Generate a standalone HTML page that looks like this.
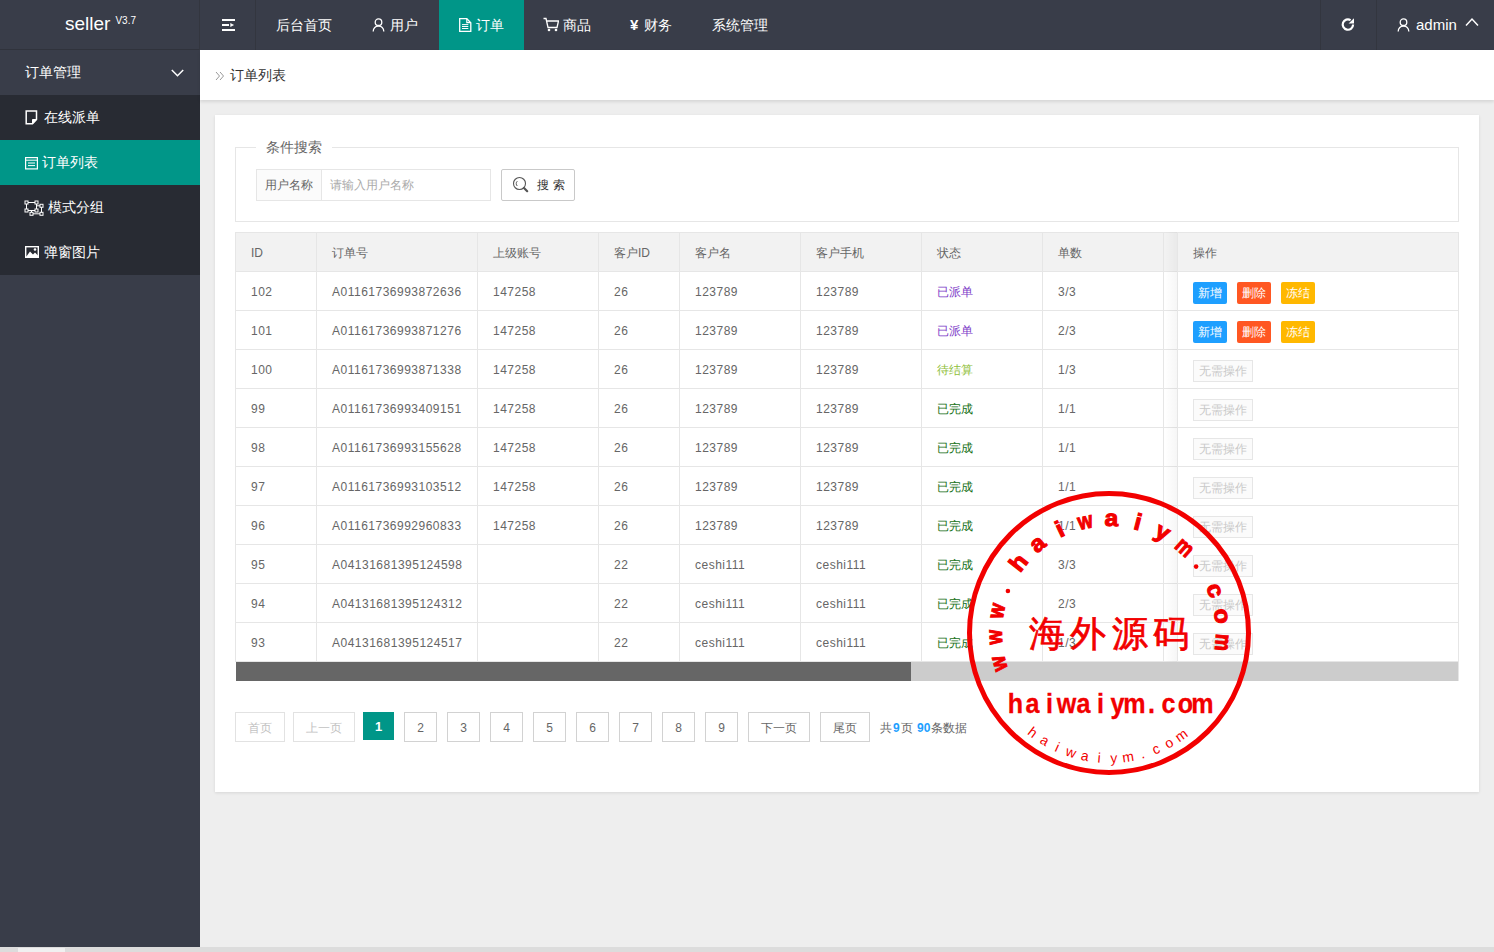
<!DOCTYPE html><html><head><meta charset="utf-8"><style>
*{margin:0;padding:0;box-sizing:border-box}
html,body{width:1494px;height:952px;overflow:hidden;background:#eeeeee;font-family:"Liberation Sans",sans-serif;color:#666;font-size:14px}
.A{position:absolute;white-space:nowrap}
.sep{position:absolute;top:0;width:1px;height:50px;background:#33363f}
.nav{position:absolute;top:0;height:50px;line-height:50px;color:#fff;font-size:14px;white-space:nowrap}
.sitem{position:absolute;left:0;width:200px;height:45px;line-height:45px;color:#fff;font-size:14px;white-space:nowrap}
.c{position:absolute;height:38px;line-height:38px;font-size:12px;color:#666;white-space:nowrap}
.num{letter-spacing:0}
.bx{position:absolute;height:22px;line-height:22px;width:34px;text-align:center;color:#fff;font-size:12px;border-radius:2px}
.dis{position:absolute;height:22px;line-height:20px;width:60px;text-align:center;color:#c9c9c9;font-size:12px;border:1px solid #e6e6e6;background:#fbfbfb;border-radius:0}
.pg{position:absolute;top:712px;height:30px;line-height:30px;border:1px solid #d2d2d2;background:#fff;text-align:center;font-size:12px;color:#666}
.hl{position:absolute;background:#e6e6e6}
</style></head><body>
<div class="A" style="left:0;top:0;width:1494px;height:50px;background:#393D49"></div>
<div class="A" style="left:0;top:50px;width:200px;height:897px;background:#393D49"></div>
<div class="A" style="left:0;top:49px;width:200px;height:1px;background:#30333c"></div>
<div class="A" style="left:65px;top:11px;font-size:19px;color:#fff;line-height:26px">seller<sup style="font-size:10px;position:relative;top:-3px;margin-left:5px;vertical-align:top">V3.7</sup></div>
<div class="sep" style="left:199px"></div>
<div class="sep" style="left:255px"></div>
<div class="sep" style="left:1320px"></div>
<div class="sep" style="left:1376px"></div>
<svg class="A" style="left:221px;top:18px" width="16" height="14" viewBox="0 0 16 14">
<rect x="1" y="1" width="13" height="2" fill="#fff"/><rect x="1" y="6" width="7" height="2" fill="#fff"/><rect x="1" y="11" width="13" height="2" fill="#fff"/>
<path d="M9.3 4.9 L13.1 7 L9.3 9.1Z" fill="#fff"/></svg>
<div class="nav" style="left:276px">后台首页</div>
<svg class="A" style="left:372px;top:18px" width="13" height="14" viewBox="0 0 13 14"><circle cx="6.5" cy="4.2" r="3.3" fill="none" stroke="#fff" stroke-width="1.3"/><path d="M1.2 13.5 C1.2 9.6 3.6 8.2 6.5 8.2 C9.4 8.2 11.8 9.6 11.8 13.5" fill="none" stroke="#fff" stroke-width="1.3"/></svg>
<div class="nav" style="left:390px">用户</div>
<div class="A" style="left:439px;top:0;width:85px;height:50px;background:#009688"></div>
<svg class="A" style="left:459px;top:18px" width="13" height="14" viewBox="0 0 13 14"><path d="M0.7 0.7 H7.8 L11.8 4.7 V13.3 H0.7Z" fill="none" stroke="#fff" stroke-width="1.3"/><path d="M7.8 0.7 V4.7 H11.8" fill="none" stroke="#fff" stroke-width="1.2"/><path d="M3 6.6 H9.3 M3 8.5 H9.3 M3 10.5 H9.3" stroke="#fff" stroke-width="1"/></svg>
<div class="nav" style="left:476px">订单</div>
<svg class="A" style="left:543px;top:17px" width="16" height="15" viewBox="0 0 16 15"><path d="M0.5 1.5 H3 L5 10.5 H14 L15.5 4 H4" fill="none" stroke="#fff" stroke-width="1.3"/><circle cx="6" cy="13" r="1.3" fill="#fff"/><circle cx="13" cy="13" r="1.3" fill="#fff"/></svg>
<div class="nav" style="left:563px">商品</div>
<div class="nav" style="left:630px;font-weight:bold;font-size:15px">¥</div>
<div class="nav" style="left:644px">财务</div>
<div class="nav" style="left:712px">系统管理</div>
<svg class="A" style="left:1340px;top:17px" width="16" height="16" viewBox="0 0 16 16"><path d="M13.1 7.6 A5.2 5.2 0 1 1 10.6 3.1" fill="none" stroke="#fff" stroke-width="2.2"/><path d="M14 1.2 L14 6.6 L8.6 6.6Z" fill="#fff"/></svg>
<svg class="A" style="left:1397px;top:18px" width="13" height="14" viewBox="0 0 13 14"><circle cx="6.5" cy="4.2" r="3.3" fill="none" stroke="#fff" stroke-width="1.3"/><path d="M1.2 13.5 C1.2 9.6 3.6 8.2 6.5 8.2 C9.4 8.2 11.8 9.6 11.8 13.5" fill="none" stroke="#fff" stroke-width="1.3"/></svg>
<div class="nav" style="left:1416px;font-size:15px">admin</div>
<svg class="A" style="left:1465px;top:17px" width="14" height="10" viewBox="0 0 14 10"><path d="M1 8.5 L7 2 L13 8.5" fill="none" stroke="#fff" stroke-width="1.5"/></svg>
<div class="sitem" style="top:50px;background:#393D49"><span style="position:absolute;left:25px">订单管理</span></div>
<svg class="A" style="left:171px;top:69px" width="13" height="9" viewBox="0 0 13 9"><path d="M0.8 1 L6.5 6.8 L12.2 1" fill="none" stroke="#fff" stroke-width="1.5"/></svg>
<div class="A" style="left:0;top:95px;width:200px;height:180px;background:#282B33"></div>
<div class="A" style="left:0;top:140px;width:200px;height:45px;background:#009688"></div>
<div class="sitem" style="top:95px"><span style="position:absolute;left:44px">在线派单</span></div>
<svg class="A" style="left:25px;top:110px" width="13" height="15" viewBox="0 0 13 15"><path d="M1.2 1 H11.5 V9.5 L7.5 13.8 H1.2Z" fill="none" stroke="#fff" stroke-width="1.5"/><path d="M11.5 9.5 H7.5 V13.8Z" fill="#fff" stroke="#fff" stroke-width="1"/></svg>
<div class="sitem" style="top:140px"><span style="position:absolute;left:42px">订单列表</span></div>
<svg class="A" style="left:25px;top:157px" width="13" height="13" viewBox="0 0 13 13"><rect x="0.6" y="0.6" width="11.8" height="11.3" fill="none" stroke="#fff" stroke-width="1.2"/><path d="M1 3.2 H12 M3 6 H10 M3 8.6 H10" stroke="#fff" stroke-width="1"/></svg>
<div class="sitem" style="top:185px"><span style="position:absolute;left:48px">模式分组</span></div>
<svg class="A" style="left:24px;top:200px" width="20" height="16" viewBox="0 0 20 16"><g fill="none" stroke="#fff" stroke-width="1"><path d="M2.5 2.5 H12.5 V10.5 H2.5Z"/><path d="M7.5 10.5 V13.8 H17.5 V5.8 H12.5"/></g><g fill="#282B33" stroke="#fff" stroke-width="1"><rect x="1" y="1" width="3" height="3"/><rect x="11" y="1" width="3" height="3"/><rect x="1" y="9" width="3" height="3"/><rect x="11" y="9" width="3" height="3"/><rect x="16" y="4.3" width="3" height="3"/><rect x="6" y="12.3" width="3" height="3"/><rect x="16" y="12.3" width="3" height="3"/></g></svg>
<div class="sitem" style="top:230px"><span style="position:absolute;left:44px">弹窗图片</span></div>
<svg class="A" style="left:25px;top:246px" width="14" height="12" viewBox="0 0 14 12"><rect x="0.7" y="0.7" width="12.6" height="10.6" fill="none" stroke="#fff" stroke-width="1.4"/><path d="M1 11 L5 5.5 L8 8.5 L10 6.5 L13 9.5 V11Z" fill="#fff"/><circle cx="10" cy="3.5" r="1.3" fill="#fff"/></svg>
<div class="A" style="left:200px;top:50px;width:1294px;height:50px;background:#fff;box-shadow:0 2px 3px rgba(0,0,0,.10)"></div>
<svg class="A" style="left:215px;top:71px" width="10" height="10" viewBox="0 0 10 10"><path d="M1 1 L4.5 5 L1 9 M5 1 L8.5 5 L5 9" fill="none" stroke="#999" stroke-width="1"/></svg>
<div class="A" style="left:230px;top:66px;font-size:14px;color:#333;line-height:18px">订单列表</div>
<div class="A" style="left:215px;top:115px;width:1264px;height:677px;background:#fff;box-shadow:0 1px 3px rgba(0,0,0,.1)"></div>
<div class="A" style="left:235px;top:147px;width:1224px;height:75px;border:1px solid #e6e6e6"></div>
<div class="A" style="left:256px;top:138px;padding:0 10px;background:#fff;font-size:14px;color:#666;line-height:18px">条件搜索</div>
<div class="A" style="left:256px;top:169px;width:66px;height:32px;border:1px solid #e6e6e6;background:#fbfbfb;line-height:30px;font-size:12px;color:#666;padding-left:8px">用户名称</div>
<div class="A" style="left:321px;top:169px;width:170px;height:32px;border:1px solid #e6e6e6;background:#fff;line-height:30px;font-size:12px;color:#aaa;padding-left:8px">请输入用户名称</div>
<div class="A" style="left:501px;top:169px;width:74px;height:32px;border:1px solid #c9c9c9;border-radius:2px;background:#fff"></div>
<svg class="A" style="left:512px;top:176px" width="18" height="18" viewBox="0 0 18 18"><circle cx="7.5" cy="7.5" r="6" fill="none" stroke="#555" stroke-width="1.1"/><path d="M5.3 5.2 A3.2 3.2 0 0 0 5.3 10" fill="none" stroke="#555" stroke-width="1"/><path d="M12 12 L15.2 15.2" stroke="#555" stroke-width="2.2" stroke-linecap="round"/></svg>
<div class="A" style="left:537px;top:177px;font-size:12px;color:#333;line-height:16px;letter-spacing:4px">搜索</div>
<div class="A" style="left:235px;top:232px;width:1224px;height:39px;background:#f2f2f2"></div>
<div class="hl" style="left:235px;top:232px;width:1px;height:430px"></div>
<div class="hl" style="left:1458px;top:232px;width:1px;height:449px"></div>
<div class="hl" style="left:235px;top:232px;width:1224px;height:1px"></div>
<div class="hl" style="left:235px;top:271px;width:1224px;height:1px"></div>
<div class="hl" style="left:235px;top:310px;width:1224px;height:1px"></div>
<div class="hl" style="left:235px;top:349px;width:1224px;height:1px"></div>
<div class="hl" style="left:235px;top:388px;width:1224px;height:1px"></div>
<div class="hl" style="left:235px;top:427px;width:1224px;height:1px"></div>
<div class="hl" style="left:235px;top:466px;width:1224px;height:1px"></div>
<div class="hl" style="left:235px;top:505px;width:1224px;height:1px"></div>
<div class="hl" style="left:235px;top:544px;width:1224px;height:1px"></div>
<div class="hl" style="left:235px;top:583px;width:1224px;height:1px"></div>
<div class="hl" style="left:235px;top:622px;width:1224px;height:1px"></div>
<div class="hl" style="left:235px;top:661px;width:1224px;height:1px"></div>
<div class="hl" style="left:316px;top:232px;width:1px;height:430px"></div>
<div class="hl" style="left:477px;top:232px;width:1px;height:430px"></div>
<div class="hl" style="left:598px;top:232px;width:1px;height:430px"></div>
<div class="hl" style="left:679px;top:232px;width:1px;height:430px"></div>
<div class="hl" style="left:800px;top:232px;width:1px;height:430px"></div>
<div class="hl" style="left:921px;top:232px;width:1px;height:430px"></div>
<div class="hl" style="left:1042px;top:232px;width:1px;height:430px"></div>
<div class="hl" style="left:1163px;top:232px;width:1px;height:430px"></div>
<div class="c" style="left:251px;top:234px">ID</div>
<div class="c" style="left:332px;top:234px">订单号</div>
<div class="c" style="left:493px;top:234px">上级账号</div>
<div class="c" style="left:614px;top:234px">客户ID</div>
<div class="c" style="left:695px;top:234px">客户名</div>
<div class="c" style="left:816px;top:234px">客户手机</div>
<div class="c" style="left:937px;top:234px">状态</div>
<div class="c" style="left:1058px;top:234px">单数</div>
<div class="c" style="left:251px;top:273px;letter-spacing:0.5px;">102</div>
<div class="c" style="left:332px;top:273px;letter-spacing:0.5px;">A01161736993872636</div>
<div class="c" style="left:493px;top:273px;letter-spacing:0.5px;">147258</div>
<div class="c" style="left:614px;top:273px;letter-spacing:0.5px;">26</div>
<div class="c" style="left:695px;top:273px;letter-spacing:0.5px;">123789</div>
<div class="c" style="left:816px;top:273px;letter-spacing:0.5px;">123789</div>
<div class="c" style="left:937px;top:273px;color:#7d3cc8;">已派单</div>
<div class="c" style="left:1058px;top:273px;letter-spacing:0.5px;">3/3</div>
<div class="c" style="left:251px;top:312px;letter-spacing:0.5px;">101</div>
<div class="c" style="left:332px;top:312px;letter-spacing:0.5px;">A01161736993871276</div>
<div class="c" style="left:493px;top:312px;letter-spacing:0.5px;">147258</div>
<div class="c" style="left:614px;top:312px;letter-spacing:0.5px;">26</div>
<div class="c" style="left:695px;top:312px;letter-spacing:0.5px;">123789</div>
<div class="c" style="left:816px;top:312px;letter-spacing:0.5px;">123789</div>
<div class="c" style="left:937px;top:312px;color:#7d3cc8;">已派单</div>
<div class="c" style="left:1058px;top:312px;letter-spacing:0.5px;">2/3</div>
<div class="c" style="left:251px;top:351px;letter-spacing:0.5px;">100</div>
<div class="c" style="left:332px;top:351px;letter-spacing:0.5px;">A01161736993871338</div>
<div class="c" style="left:493px;top:351px;letter-spacing:0.5px;">147258</div>
<div class="c" style="left:614px;top:351px;letter-spacing:0.5px;">26</div>
<div class="c" style="left:695px;top:351px;letter-spacing:0.5px;">123789</div>
<div class="c" style="left:816px;top:351px;letter-spacing:0.5px;">123789</div>
<div class="c" style="left:937px;top:351px;color:#8fc03a;">待结算</div>
<div class="c" style="left:1058px;top:351px;letter-spacing:0.5px;">1/3</div>
<div class="c" style="left:251px;top:390px;letter-spacing:0.5px;">99</div>
<div class="c" style="left:332px;top:390px;letter-spacing:0.5px;">A01161736993409151</div>
<div class="c" style="left:493px;top:390px;letter-spacing:0.5px;">147258</div>
<div class="c" style="left:614px;top:390px;letter-spacing:0.5px;">26</div>
<div class="c" style="left:695px;top:390px;letter-spacing:0.5px;">123789</div>
<div class="c" style="left:816px;top:390px;letter-spacing:0.5px;">123789</div>
<div class="c" style="left:937px;top:390px;color:#157015;">已完成</div>
<div class="c" style="left:1058px;top:390px;letter-spacing:0.5px;">1/1</div>
<div class="c" style="left:251px;top:429px;letter-spacing:0.5px;">98</div>
<div class="c" style="left:332px;top:429px;letter-spacing:0.5px;">A01161736993155628</div>
<div class="c" style="left:493px;top:429px;letter-spacing:0.5px;">147258</div>
<div class="c" style="left:614px;top:429px;letter-spacing:0.5px;">26</div>
<div class="c" style="left:695px;top:429px;letter-spacing:0.5px;">123789</div>
<div class="c" style="left:816px;top:429px;letter-spacing:0.5px;">123789</div>
<div class="c" style="left:937px;top:429px;color:#157015;">已完成</div>
<div class="c" style="left:1058px;top:429px;letter-spacing:0.5px;">1/1</div>
<div class="c" style="left:251px;top:468px;letter-spacing:0.5px;">97</div>
<div class="c" style="left:332px;top:468px;letter-spacing:0.5px;">A01161736993103512</div>
<div class="c" style="left:493px;top:468px;letter-spacing:0.5px;">147258</div>
<div class="c" style="left:614px;top:468px;letter-spacing:0.5px;">26</div>
<div class="c" style="left:695px;top:468px;letter-spacing:0.5px;">123789</div>
<div class="c" style="left:816px;top:468px;letter-spacing:0.5px;">123789</div>
<div class="c" style="left:937px;top:468px;color:#157015;">已完成</div>
<div class="c" style="left:1058px;top:468px;letter-spacing:0.5px;">1/1</div>
<div class="c" style="left:251px;top:507px;letter-spacing:0.5px;">96</div>
<div class="c" style="left:332px;top:507px;letter-spacing:0.5px;">A01161736992960833</div>
<div class="c" style="left:493px;top:507px;letter-spacing:0.5px;">147258</div>
<div class="c" style="left:614px;top:507px;letter-spacing:0.5px;">26</div>
<div class="c" style="left:695px;top:507px;letter-spacing:0.5px;">123789</div>
<div class="c" style="left:816px;top:507px;letter-spacing:0.5px;">123789</div>
<div class="c" style="left:937px;top:507px;color:#157015;">已完成</div>
<div class="c" style="left:1058px;top:507px;letter-spacing:0.5px;">1/1</div>
<div class="c" style="left:251px;top:546px;letter-spacing:0.5px;">95</div>
<div class="c" style="left:332px;top:546px;letter-spacing:0.5px;">A04131681395124598</div>
<div class="c" style="left:493px;top:546px;letter-spacing:0.5px;"></div>
<div class="c" style="left:614px;top:546px;letter-spacing:0.5px;">22</div>
<div class="c" style="left:695px;top:546px;letter-spacing:0.5px;">ceshi111</div>
<div class="c" style="left:816px;top:546px;letter-spacing:0.5px;">ceshi111</div>
<div class="c" style="left:937px;top:546px;color:#157015;">已完成</div>
<div class="c" style="left:1058px;top:546px;letter-spacing:0.5px;">3/3</div>
<div class="c" style="left:251px;top:585px;letter-spacing:0.5px;">94</div>
<div class="c" style="left:332px;top:585px;letter-spacing:0.5px;">A04131681395124312</div>
<div class="c" style="left:493px;top:585px;letter-spacing:0.5px;"></div>
<div class="c" style="left:614px;top:585px;letter-spacing:0.5px;">22</div>
<div class="c" style="left:695px;top:585px;letter-spacing:0.5px;">ceshi111</div>
<div class="c" style="left:816px;top:585px;letter-spacing:0.5px;">ceshi111</div>
<div class="c" style="left:937px;top:585px;color:#157015;">已完成</div>
<div class="c" style="left:1058px;top:585px;letter-spacing:0.5px;">2/3</div>
<div class="c" style="left:251px;top:624px;letter-spacing:0.5px;">93</div>
<div class="c" style="left:332px;top:624px;letter-spacing:0.5px;">A04131681395124517</div>
<div class="c" style="left:493px;top:624px;letter-spacing:0.5px;"></div>
<div class="c" style="left:614px;top:624px;letter-spacing:0.5px;">22</div>
<div class="c" style="left:695px;top:624px;letter-spacing:0.5px;">ceshi111</div>
<div class="c" style="left:816px;top:624px;letter-spacing:0.5px;">ceshi111</div>
<div class="c" style="left:937px;top:624px;color:#157015;">已完成</div>
<div class="c" style="left:1058px;top:624px;letter-spacing:0.5px;">1/3</div>
<div class="A" style="left:1165px;top:232px;width:12px;height:430px;background:linear-gradient(to right,rgba(0,0,0,0),rgba(0,0,0,.035))"></div>
<div class="A" style="left:1177px;top:232px;width:281px;height:430px;background:#fff"></div>
<div class="A" style="left:1177px;top:232px;width:281px;height:39px;background:#f2f2f2"></div>
<div class="hl" style="left:1177px;top:232px;width:281px;height:1px"></div>
<div class="hl" style="left:1177px;top:271px;width:281px;height:1px"></div>
<div class="hl" style="left:1177px;top:310px;width:281px;height:1px"></div>
<div class="hl" style="left:1177px;top:349px;width:281px;height:1px"></div>
<div class="hl" style="left:1177px;top:388px;width:281px;height:1px"></div>
<div class="hl" style="left:1177px;top:427px;width:281px;height:1px"></div>
<div class="hl" style="left:1177px;top:466px;width:281px;height:1px"></div>
<div class="hl" style="left:1177px;top:505px;width:281px;height:1px"></div>
<div class="hl" style="left:1177px;top:544px;width:281px;height:1px"></div>
<div class="hl" style="left:1177px;top:583px;width:281px;height:1px"></div>
<div class="hl" style="left:1177px;top:622px;width:281px;height:1px"></div>
<div class="hl" style="left:1177px;top:661px;width:281px;height:1px"></div>
<div class="hl" style="left:1177px;top:232px;width:1px;height:430px;background:#e6e6e6"></div>
<div class="c" style="left:1193px;top:234px">操作</div>
<div class="bx" style="left:1193px;top:282px;background:#1E9FFF">新增</div>
<div class="bx" style="left:1237px;top:282px;background:#FF5722">删除</div>
<div class="bx" style="left:1281px;top:282px;background:#FFB800">冻结</div>
<div class="bx" style="left:1193px;top:321px;background:#1E9FFF">新增</div>
<div class="bx" style="left:1237px;top:321px;background:#FF5722">删除</div>
<div class="bx" style="left:1281px;top:321px;background:#FFB800">冻结</div>
<div class="dis" style="left:1193px;top:360px">无需操作</div>
<div class="dis" style="left:1193px;top:399px">无需操作</div>
<div class="dis" style="left:1193px;top:438px">无需操作</div>
<div class="dis" style="left:1193px;top:477px">无需操作</div>
<div class="dis" style="left:1193px;top:516px">无需操作</div>
<div class="dis" style="left:1193px;top:555px">无需操作</div>
<div class="dis" style="left:1193px;top:594px">无需操作</div>
<div class="dis" style="left:1193px;top:633px">无需操作</div>
<div class="A" style="left:236px;top:662px;width:1222px;height:19px;background:#cccccc"></div>
<div class="A" style="left:236px;top:662px;width:675px;height:19px;background:#666666"></div>
<div class="pg" style="left:235px;width:50px;color:#c2c2c2;border-color:#e2e2e2">首页</div>
<div class="pg" style="left:293px;width:62px;color:#c2c2c2;border-color:#e2e2e2">上一页</div>
<div class="pg" style="left:404px;width:33px;color:#666;border-color:#d2d2d2">2</div>
<div class="pg" style="left:447px;width:33px;color:#666;border-color:#d2d2d2">3</div>
<div class="pg" style="left:490px;width:33px;color:#666;border-color:#d2d2d2">4</div>
<div class="pg" style="left:533px;width:33px;color:#666;border-color:#d2d2d2">5</div>
<div class="pg" style="left:576px;width:33px;color:#666;border-color:#d2d2d2">6</div>
<div class="pg" style="left:619px;width:33px;color:#666;border-color:#d2d2d2">7</div>
<div class="pg" style="left:662px;width:33px;color:#666;border-color:#d2d2d2">8</div>
<div class="pg" style="left:705px;width:33px;color:#666;border-color:#d2d2d2">9</div>
<div class="pg" style="left:748px;width:62px;color:#666;border-color:#d2d2d2">下一页</div>
<div class="pg" style="left:820px;width:50px;color:#666;border-color:#d2d2d2">尾页</div>
<div class="A" style="left:363px;top:712px;width:31px;height:28px;background:#009688;color:#fff;font-weight:bold;text-align:center;line-height:30px;font-size:13px">1</div>
<div class="A" style="left:880px;top:719px;font-size:12px;color:#666;line-height:18px">共<b style="color:#1E9FFF;padding:0 1px">9</b>页 <b style="color:#1E9FFF;padding:0 1px">90</b>条数据</div>
<div class="A" style="left:0;top:947px;width:1494px;height:5px;background:#dcdcdc"></div>
<div class="A" style="left:18px;top:948px;width:47px;height:4px;background:#f0f0f0"></div>
<svg class="A" style="left:0;top:0;pointer-events:none" width="1494" height="952" viewBox="0 0 1494 952"><circle cx="1109" cy="633" r="139.5" fill="none" stroke="#f20000" stroke-width="5"/><text x="0" y="0" transform="translate(1005.9,661.6) rotate(254.5) scale(0.82,1)" text-anchor="middle" font-family="Liberation Sans" font-weight="bold" font-size="23" fill="#f20000" stroke="#f20000" stroke-width="1.1">w</text><text x="0" y="0" transform="translate(1002.1,637.0) rotate(267.9) scale(0.82,1)" text-anchor="middle" font-family="Liberation Sans" font-weight="bold" font-size="23" fill="#f20000" stroke="#f20000" stroke-width="1.1">w</text><text x="0" y="0" transform="translate(1004.0,612.2) rotate(281.2) scale(0.82,1)" text-anchor="middle" font-family="Liberation Sans" font-weight="bold" font-size="23" fill="#f20000" stroke="#f20000" stroke-width="1.1">w</text><circle cx="1007.9" cy="591.0" r="2.3" fill="#f20000"/><text x="0" y="0" transform="translate(1024.6,567.3) rotate(307.9) scale(1.06,1)" text-anchor="middle" font-family="Liberation Sans" font-weight="bold" font-size="23" fill="#f20000" stroke="#f20000" stroke-width="1.1">h</text><text x="0" y="0" transform="translate(1042.0,549.6) rotate(321.2) scale(1.06,1)" text-anchor="middle" font-family="Liberation Sans" font-weight="bold" font-size="23" fill="#f20000" stroke="#f20000" stroke-width="1.1">a</text><text x="0" y="0" transform="translate(1063.1,536.3) rotate(334.6) scale(1.06,1)" text-anchor="middle" font-family="Liberation Sans" font-weight="bold" font-size="23" fill="#f20000" stroke="#f20000" stroke-width="1.1">i</text><text x="0" y="0" transform="translate(1086.7,528.4) rotate(347.9) scale(0.82,1)" text-anchor="middle" font-family="Liberation Sans" font-weight="bold" font-size="23" fill="#f20000" stroke="#f20000" stroke-width="1.1">w</text><text x="0" y="0" transform="translate(1111.4,526.0) rotate(361.3) scale(1.06,1)" text-anchor="middle" font-family="Liberation Sans" font-weight="bold" font-size="23" fill="#f20000" stroke="#f20000" stroke-width="1.1">a</text><text x="0" y="0" transform="translate(1136.1,529.5) rotate(374.6) scale(1.06,1)" text-anchor="middle" font-family="Liberation Sans" font-weight="bold" font-size="23" fill="#f20000" stroke="#f20000" stroke-width="1.1">i</text><text x="0" y="0" transform="translate(1159.2,538.5) rotate(388.0) scale(1.06,1)" text-anchor="middle" font-family="Liberation Sans" font-weight="bold" font-size="23" fill="#f20000" stroke="#f20000" stroke-width="1.1">y</text><text x="0" y="0" transform="translate(1179.7,552.7) rotate(401.4) scale(0.82,1)" text-anchor="middle" font-family="Liberation Sans" font-weight="bold" font-size="23" fill="#f20000" stroke="#f20000" stroke-width="1.1">m</text><circle cx="1196.1" cy="566.6" r="2.3" fill="#f20000"/><text x="0" y="0" transform="translate(1208.2,593.0) rotate(428.0) scale(1.06,1)" text-anchor="middle" font-family="Liberation Sans" font-weight="bold" font-size="23" fill="#f20000" stroke="#f20000" stroke-width="1.1">c</text><text x="0" y="0" transform="translate(1214.8,617.0) rotate(441.4) scale(1.06,1)" text-anchor="middle" font-family="Liberation Sans" font-weight="bold" font-size="23" fill="#f20000" stroke="#f20000" stroke-width="1.1">o</text><text x="0" y="0" transform="translate(1215.6,641.9) rotate(454.8) scale(0.82,1)" text-anchor="middle" font-family="Liberation Sans" font-weight="bold" font-size="23" fill="#f20000" stroke="#f20000" stroke-width="1.1">m</text><text x="1047.0" y="646" text-anchor="middle" font-family="Liberation Serif" font-size="36" fill="#f20000" stroke="#f20000" stroke-width="0.7">海</text><text x="1088.3" y="646" text-anchor="middle" font-family="Liberation Serif" font-size="36" fill="#f20000" stroke="#f20000" stroke-width="0.7">外</text><text x="1129.6" y="646" text-anchor="middle" font-family="Liberation Serif" font-size="36" fill="#f20000" stroke="#f20000" stroke-width="0.7">源</text><text x="1170.9" y="646" text-anchor="middle" font-family="Liberation Serif" font-size="36" fill="#f20000" stroke="#f20000" stroke-width="0.7">码</text><text x="0" y="0" transform="translate(1015.5,713) scale(0.93,1)" text-anchor="middle" font-family="Liberation Sans" font-weight="bold" font-size="27" fill="#f20000" stroke="#f20000" stroke-width="0.3">h</text><text x="0" y="0" transform="translate(1032.5,713) scale(0.93,1)" text-anchor="middle" font-family="Liberation Sans" font-weight="bold" font-size="27" fill="#f20000" stroke="#f20000" stroke-width="0.3">a</text><text x="0" y="0" transform="translate(1049.5,713) scale(0.93,1)" text-anchor="middle" font-family="Liberation Sans" font-weight="bold" font-size="27" fill="#f20000" stroke="#f20000" stroke-width="0.3">i</text><text x="0" y="0" transform="translate(1066.5,713) scale(0.93,1)" text-anchor="middle" font-family="Liberation Sans" font-weight="bold" font-size="27" fill="#f20000" stroke="#f20000" stroke-width="0.3">w</text><text x="0" y="0" transform="translate(1083.5,713) scale(0.93,1)" text-anchor="middle" font-family="Liberation Sans" font-weight="bold" font-size="27" fill="#f20000" stroke="#f20000" stroke-width="0.3">a</text><text x="0" y="0" transform="translate(1100.5,713) scale(0.93,1)" text-anchor="middle" font-family="Liberation Sans" font-weight="bold" font-size="27" fill="#f20000" stroke="#f20000" stroke-width="0.3">i</text><text x="0" y="0" transform="translate(1117.5,713) scale(0.93,1)" text-anchor="middle" font-family="Liberation Sans" font-weight="bold" font-size="27" fill="#f20000" stroke="#f20000" stroke-width="0.3">y</text><text x="0" y="0" transform="translate(1134.5,713) scale(0.93,1)" text-anchor="middle" font-family="Liberation Sans" font-weight="bold" font-size="27" fill="#f20000" stroke="#f20000" stroke-width="0.3">m</text><text x="0" y="0" transform="translate(1151.5,713) scale(0.93,1)" text-anchor="middle" font-family="Liberation Sans" font-weight="bold" font-size="27" fill="#f20000" stroke="#f20000" stroke-width="0.3">.</text><text x="0" y="0" transform="translate(1168.5,713) scale(0.93,1)" text-anchor="middle" font-family="Liberation Sans" font-weight="bold" font-size="27" fill="#f20000" stroke="#f20000" stroke-width="0.3">c</text><text x="0" y="0" transform="translate(1185.5,713) scale(0.93,1)" text-anchor="middle" font-family="Liberation Sans" font-weight="bold" font-size="27" fill="#f20000" stroke="#f20000" stroke-width="0.3">o</text><text x="0" y="0" transform="translate(1202.5,713) scale(0.93,1)" text-anchor="middle" font-family="Liberation Sans" font-weight="bold" font-size="27" fill="#f20000" stroke="#f20000" stroke-width="0.3">m</text><text x="0" y="0" transform="translate(1029.9,736.1) rotate(37.5)" text-anchor="middle" font-family="Liberation Sans" font-size="14" fill="#f20000">h</text><text x="0" y="0" transform="translate(1042.3,744.6) rotate(30.9)" text-anchor="middle" font-family="Liberation Sans" font-size="14" fill="#f20000">a</text><text x="0" y="0" transform="translate(1055.5,751.5) rotate(24.3)" text-anchor="middle" font-family="Liberation Sans" font-size="14" fill="#f20000">i</text><text x="0" y="0" transform="translate(1069.5,756.9) rotate(17.7)" text-anchor="middle" font-family="Liberation Sans" font-size="14" fill="#f20000">w</text><text x="0" y="0" transform="translate(1084.1,760.6) rotate(11.1)" text-anchor="middle" font-family="Liberation Sans" font-size="14" fill="#f20000">a</text><text x="0" y="0" transform="translate(1098.9,762.6) rotate(4.5)" text-anchor="middle" font-family="Liberation Sans" font-size="14" fill="#f20000">i</text><text x="0" y="0" transform="translate(1113.9,762.9) rotate(-2.2)" text-anchor="middle" font-family="Liberation Sans" font-size="14" fill="#f20000">y</text><text x="0" y="0" transform="translate(1128.8,761.5) rotate(-8.8)" text-anchor="middle" font-family="Liberation Sans" font-size="14" fill="#f20000">m</text><text x="0" y="0" transform="translate(1143.5,758.3) rotate(-15.4)" text-anchor="middle" font-family="Liberation Sans" font-size="14" fill="#f20000">.</text><text x="0" y="0" transform="translate(1157.7,753.5) rotate(-22.0)" text-anchor="middle" font-family="Liberation Sans" font-size="14" fill="#f20000">c</text><text x="0" y="0" transform="translate(1171.2,747.1) rotate(-28.6)" text-anchor="middle" font-family="Liberation Sans" font-size="14" fill="#f20000">o</text><text x="0" y="0" transform="translate(1183.9,739.2) rotate(-35.2)" text-anchor="middle" font-family="Liberation Sans" font-size="14" fill="#f20000">m</text></svg>
</body></html>
